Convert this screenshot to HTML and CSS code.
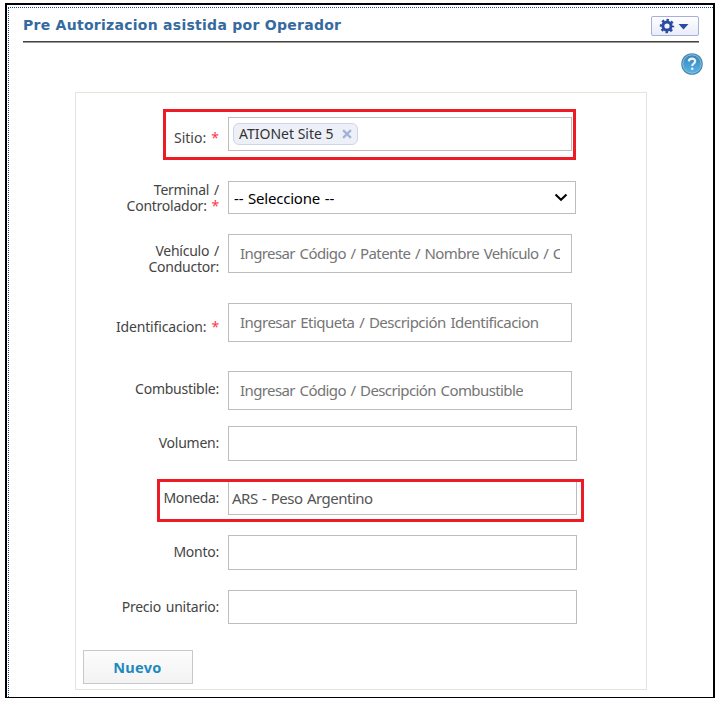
FILE: index.html
```html
<!DOCTYPE html>
<html lang="es">
<head>
<meta charset="utf-8">
<title>Pre Autorizacion asistida por Operador</title>
<link rel="stylesheet" href="styles.css">
</head>
<body>
<main class="frame">
  <div class="panel">
    <header class="header">
      <h1 class="title">Pre Autorizacion asistida por Operador</h1>
      <button class="settings" type="button">
        <svg width="32" height="16" viewBox="0 0 32 16" fill="none">
          <circle cx="8" cy="8" r="4.1" stroke="#2b4ba3" stroke-width="3"/>
          <circle cx="8" cy="8" r="6.1" stroke="#2b4ba3" stroke-width="2.2" stroke-dasharray="2.5 2.291" stroke-dashoffset="1.25"/>
          <path d="M19.500 6h10L24.500 11.500z" fill="#2b4ba3"/>
        </svg>
      </button>
    </header>
    <div class="help">
      <svg width="22" height="22" viewBox="0 0 22 22">
        <defs><linearGradient id="g" x1="0" y1="0" x2="0" y2="1"><stop offset="0" stop-color="#3b83b8"/><stop offset="1" stop-color="#55b4e3"/></linearGradient></defs>
        <circle cx="11" cy="11" r="10.800" fill="#4686b0"/>
        <circle cx="11" cy="11" r="9.200" fill="url(#g)" stroke="#8cc4e4" stroke-width="1"/>
        <path d="M7.800 8.400C8 4.700 14.300 4.800 14.200 8.400C14.100 10.500 11.200 10.500 11.200 13" fill="none" stroke="#e9f5fc" stroke-width="2.100"/>
        <circle cx="11.200" cy="15.700" r="1.300" fill="#e9f5fc"/>
      </svg>
    </div>
    <form class="form">
      <div class="row site marked">
        <label class="label">Sitio: <b class="req">*</b></label>
        <div class="field"><span class="tag"><span class="tag-text">ATIONet Site 5</span><svg width="10" height="10" viewBox="0 0 9 9"><path d="M1 1l7 7M8 1l-7 7" stroke="#a3b1d8" stroke-width="2"/></svg></span></div>
      </div>
      <div class="row terminal">
        <label class="label">Terminal /<br>Controlador: <b class="req">*</b></label>
        <div class="field select"><span class="value">-- Seleccione --</span><svg width="14" height="9" viewBox="0 0 14 9"><path d="M1.500 1.500L7 6.800l5.500-5.300" fill="none" stroke="#000" stroke-width="2"/></svg></div>
      </div>
      <div class="row vehicle">
        <label class="label">Vehículo /<br>Conductor:</label>
        <div class="field hint"><span class="clip">Ingresar Código / Patente / Nombre Vehículo / Conductor</span></div>
      </div>
      <div class="row ident">
        <label class="label">Identificacion: <b class="req">*</b></label>
        <div class="field hint"><span class="clip">Ingresar Etiqueta / Descripción Identificacion</span></div>
      </div>
      <div class="row fuel">
        <label class="label">Combustible:</label>
        <div class="field hint"><span class="clip">Ingresar Código / Descripción Combustible</span></div>
      </div>
      <div class="row wide volume">
        <label class="label">Volumen:</label>
        <div class="field"></div>
      </div>
      <div class="row wide currency marked">
        <label class="label">Moneda:</label>
        <div class="field"><span class="currency-text">ARS - Peso Argentino</span></div>
      </div>
      <div class="row wide amount">
        <label class="label">Monto:</label>
        <div class="field"></div>
      </div>
      <div class="row wide price">
        <label class="label">Precio unitario:</label>
        <div class="field"></div>
      </div>
      <button class="new" type="button">Nuevo</button>
    </form>
  </div>
</main>
</body>
</html>
```
FILE: styles.css
```css
*, *::after { box-sizing: border-box; }
body {
  margin: 0;
  background: #fff;
  font: 14px/16px "Noto Sans", sans-serif;
  color: #444;
}
.frame {
  width: 710px;
  height: 695px;
  margin: 3px 0 0 5px;
  border: 2px solid #000;
  border-bottom-width: 1px;
  padding: 2px 0 0 1px;
}
.panel {
  height: 690px;
  border-top: 1px dotted #174a8c;
  border-left: 1px dotted #174a8c;
  padding: 8px 0 0 14px;
}
.header {
  display: flex;
  justify-content: space-between;
  align-items: flex-start;
  width: 676px;
  height: 27px;
  border-bottom: 1px solid #999;
  box-shadow: inset 0 -1px #444;
}
.title {
  margin: 0;
  font: bold 14px/18px "DejaVu Sans", sans-serif;
  letter-spacing: .27px;
  color: #346a9f;
}
.settings {
  display: flex;
  align-items: center;
  justify-content: center;
  width: 48px;
  height: 20px;
  padding: 0;
  border: 1px solid #a3b1dc;
  border-radius: 2px;
  background: linear-gradient(#fff, #e9ecf8);
}
.help { width: 680px; height: 49px; padding-top: 10px; display: flex; justify-content: flex-end; }
.form {
  width: 572px;
  height: 598px;
  margin: 0 0 0 52px;
  border: 1px solid #e4e4da;
  padding: 24px 0 0 7px;
}
.row {
  position: relative;
  display: grid;
  grid-template-columns: 136px 344px;
  column-gap: 9px;
  align-items: start;
}
.wide { grid-template-columns: 136px 349px; }
.label { text-align: right; letter-spacing: -.25px; word-spacing: 1.5px; white-space: nowrap; }
.req { font-weight: 400; color: #ff3548; }
.field {
  display: flex;
  align-items: center;
  height: 34px;
  border: 1px solid #bdbdbd;
  font-size: 15px;
  line-height: 20px;
  white-space: nowrap;
}
.site { height: 64px; }
.site .label { padding-top: 13px; letter-spacing: 0; }
.terminal { height: 53px; grid-template-columns: 136px 348px; }
.terminal .field { height: 33px; }
.terminal .label { padding-top: 1px; }
.vehicle { height: 69px; }
.vehicle .label { padding-top: 9px; line-height: 15.5px; }
.ident { height: 68px; }
.ident .label { padding-top: 16px; letter-spacing: -.15px; }
.fuel { height: 55px; }
.fuel .label { padding-top: 10px; }
.volume { height: 54px; }
.wide .label { padding-top: 9px; }
.currency { height: 55px; }
.currency .label { padding-top: 10px; letter-spacing: -.35px; }
.amount { height: 55px; }
.price { height: 60px; }
.wide .field { height: 35px; }
.price .field { height: 34px; }
.field.hint { height: 39px; padding: 0 11px 2px; color: #757575; }
.clip { overflow: hidden; letter-spacing: -.52px; word-spacing: 1.3px; }
.vehicle .clip, .fuel .clip { letter-spacing: -.6px; }
.select { justify-content: space-between; padding: 0 7px 0 5px; color: #000; }
.value { letter-spacing: -.2px; word-spacing: 1px; }
.currency-text { padding-left: 3px; color: #555; letter-spacing: -.5px; word-spacing: 1px; }
.tag {
  display: flex;
  align-items: center;
  gap: 8px;
  height: 22px;
  margin: 0 0 1px 4px;
  padding: 0 5px;
  border: 1px solid #ccd5ea;
  border-radius: 6px;
  background: #edf0f7;
  color: #333;
  font-size: 14px;
}
.marked::after {
  content: "";
  position: absolute;
  border: 3px solid #ed1c24;
}
.site::after { left: 80px; top: -8px; width: 413px; height: 51px; }
.currency::after { left: 74px; top: -1px; width: 427px; height: 43px; }
.new {
  display: block;
  width: 110px;
  height: 34px;
  border: 1px solid #c8c8c8;
  background: linear-gradient(#fcfcfc, #f3f3f3);
  color: #2189bd;
  font: 700 14.5px/20px "Noto Sans", sans-serif;
  letter-spacing: .3px;
  padding: 0 1px 1px 0;
}
```
